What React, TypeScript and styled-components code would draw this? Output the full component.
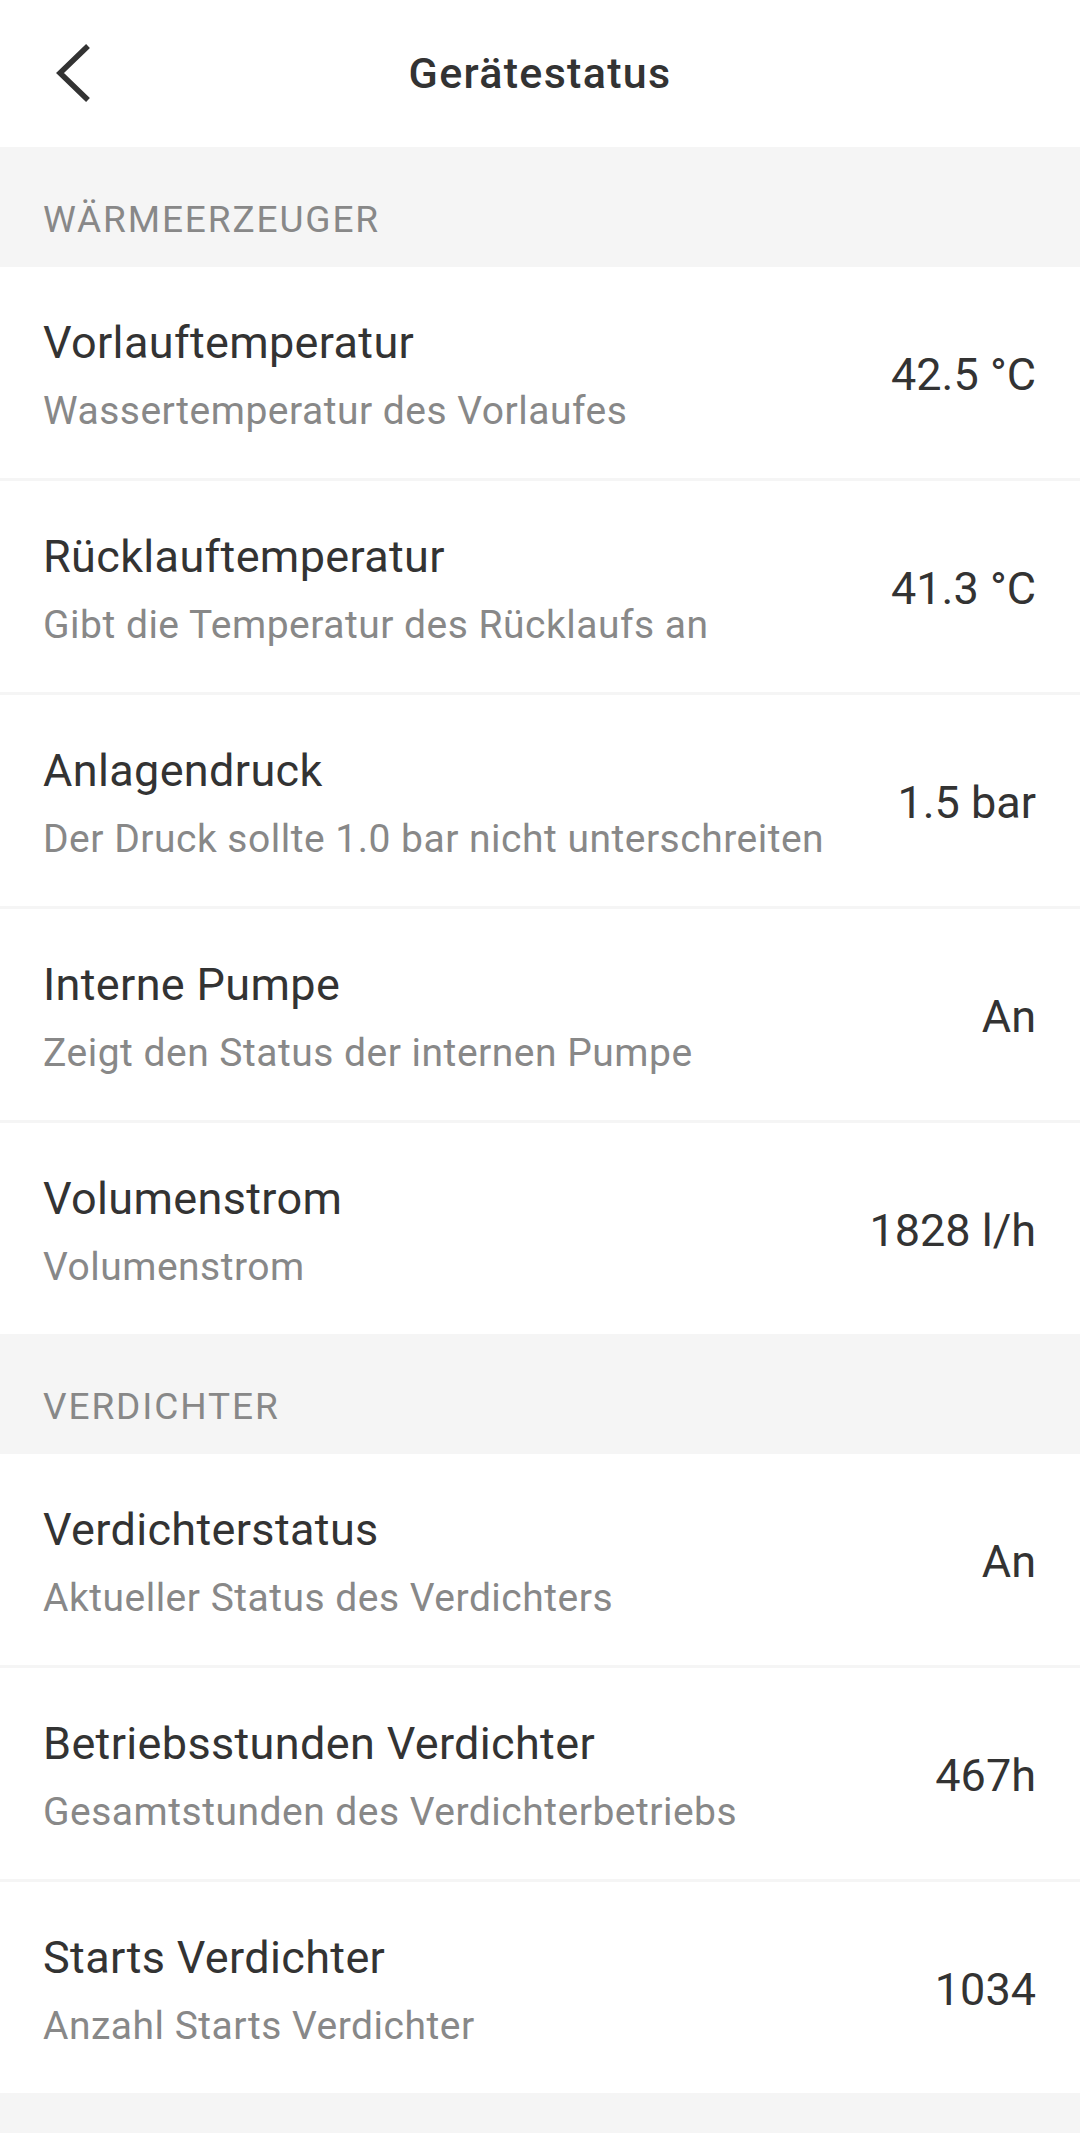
import styled, { createGlobalStyle } from 'styled-components';

const GlobalStyle = createGlobalStyle`
  html, body {
    margin: 0;
    padding: 0;
    background: #f5f5f5;
    font-family: Roboto, "Noto Sans", sans-serif;
  }
`;

type Item = { title: string; sub: string; value: string };

const sections: { name: string; items: Item[] }[] = [
  {
    name: 'WÄRMEERZEUGER',
    items: [
      { title: 'Vorlauftemperatur', sub: 'Wassertemperatur des Vorlaufes', value: '42.5 °C' },
      { title: 'Rücklauftemperatur', sub: 'Gibt die Temperatur des Rücklaufs an', value: '41.3 °C' },
      { title: 'Anlagendruck', sub: 'Der Druck sollte 1.0 bar nicht unterschreiten', value: '1.5 bar' },
      { title: 'Interne Pumpe', sub: 'Zeigt den Status der internen Pumpe', value: 'An' },
      { title: 'Volumenstrom', sub: 'Volumenstrom', value: '1828 l/h' },
    ],
  },
  {
    name: 'VERDICHTER',
    items: [
      { title: 'Verdichterstatus', sub: 'Aktueller Status des Verdichters', value: 'An' },
      { title: 'Betriebsstunden Verdichter', sub: 'Gesamtstunden des Verdichterbetriebs', value: '467h' },
      { title: 'Starts Verdichter', sub: 'Anzahl Starts Verdichter', value: '1034' },
    ],
  },
];

export default function App() {
  return (
    <>
      <GlobalStyle />
      <Screen>
        <Header>
          <BackButton aria-label="Zurück">
            <svg width="48" height="66" viewBox="0 0 48 66" fill="none">
              <path d="M38 8 L12 33 L38 58" stroke="#333" strokeWidth="5.5" strokeLinecap="square" />
            </svg>
          </BackButton>
          <Title>Gerätestatus</Title>
        </Header>
        {sections.map((s) => (
          <section key={s.name}>
            <SectionHeader>{s.name}</SectionHeader>
            {s.items.map((it, i) => (
              <Row key={it.title} $last={i === s.items.length - 1}>
                <TextCol>
                  <RowTitle>{it.title}</RowTitle>
                  <RowSub>{it.sub}</RowSub>
                </TextCol>
                <Value>{it.value}</Value>
              </Row>
            ))}
          </section>
        ))}
      </Screen>
    </>
  );
}

const Screen = styled.div`
  min-height: 2133px;
  background: #f5f5f5;
`;

const Header = styled.header`
  position: relative;
  height: 147px;
  background: #fff;
  display: flex;
  align-items: center;
  justify-content: center;
`;

const BackButton = styled.button`
  position: absolute;
  left: 48px;
  top: 40px;
  padding: 0;
  border: 0;
  background: none;
  display: flex;
`;

const Title = styled.h1`
  margin: 0;
  font-size: 43px;
  line-height: 1;
  font-weight: 500;
  letter-spacing: 1.3px;
  color: #333;
`;

const SectionHeader = styled.div`
  height: 120px;
  box-sizing: border-box;
  padding: 54px 43px 0;
  font-size: 37px;
  line-height: 1;
  letter-spacing: 1.9px;
  color: #888;
  background: #f5f5f5;
`;

const Row = styled.div<{ $last: boolean }>`
  height: 211px;
  box-sizing: content-box;
  background: #fff;
  border-bottom: ${(p) => (p.$last ? 'none' : '3px solid #f5f5f5')};
  display: flex;
  align-items: flex-start;
  justify-content: space-between;
  padding: 0 44px 0 43px;
`;

const TextCol = styled.div`
  display: flex;
  flex-direction: column;
  gap: 27px;
  padding-top: 53px;
`;

const RowTitle = styled.div`
  font-size: 45px;
  line-height: 1;
  letter-spacing: 0.35px;
  color: #333;
`;

const RowSub = styled.div`
  font-size: 39px;
  line-height: 1;
  letter-spacing: 0.5px;
  color: #888;
`;

const Value = styled.div`
  align-self: center;
  margin-top: 4px;
  font-size: 45px;
  line-height: 1;
  color: #333;
`;
